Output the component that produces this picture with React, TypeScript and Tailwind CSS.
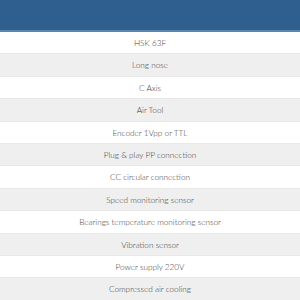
import React from "react";

const rows = [
  "HSK 63F",
  "Long nose",
  "C Axis",
  "Air Tool",
  "Encoder 1Vpp or TTL",
  "Plug & play PP connection",
  "CC circular connection",
  "Speed monitoring sensor",
  "Bearings temperature monitoring sensor",
  "Vibration sensor",
  "Power supply 220V",
  "Compressed air cooling",
];

export default function App() {
  return (
    <div className="w-[300px] h-[300px] overflow-hidden bg-white" style={{ fontFamily: "Lato, 'Open Sans', sans-serif" }}>
      <div className="h-[30px] bg-[#2e5f8f]" />
      <div className="h-[2px] bg-[#5a85b0]" />
      {rows.map((r, i) => (
        <div
          key={r}
          className={`h-[22.4px] flex items-center justify-center pt-[1px] border-b border-[#e8e8e8] text-[8.2px] font-light text-[#3a3a3a] ${i % 2 === 0 ? "bg-white" : "bg-[#efefef]"}`}
        >
          {r}
        </div>
      ))}
    </div>
  );
}
